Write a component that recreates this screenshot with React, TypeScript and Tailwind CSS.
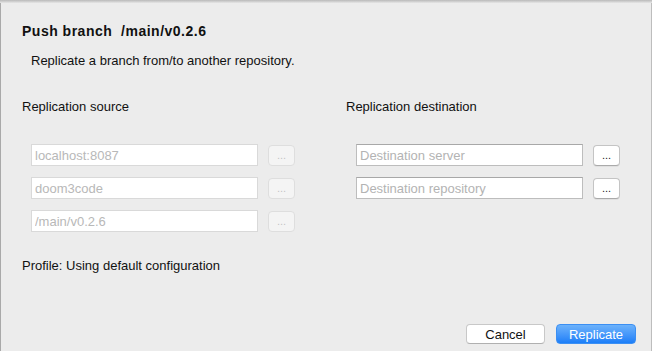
import React from "react";

const font = { fontFamily: '"Liberation Sans", Arial, sans-serif' };

function Field({
  value,
  placeholder,
  disabled,
}: {
  value?: string;
  placeholder?: string;
  disabled?: boolean;
}) {
  return (
    <div className="flex items-center gap-[10px] h-[22px]">
      <input
        readOnly
        value={value ?? ""}
        placeholder={placeholder}
        disabled={disabled}
        className={
          disabled
            ? "w-[227px] h-[22px] bg-white border border-[#d9d9d9] px-[3px] text-[13px] text-[#b8b8b8] outline-none"
            : "w-[227px] h-[22px] bg-white border border-[#bdbdbd] border-t-[#a8a8a8] px-[3px] text-[13px] text-[#222] placeholder:text-[#b3b3b3] outline-none"
        }
      />
      <button
        className={
          disabled
            ? "w-[27px] h-[21px] rounded-[4px] bg-[#f4f4f4] border border-[#dedede] text-[11px] leading-none text-[#c4c4c4] flex items-end justify-center pb-[4px]"
            : "w-[27px] h-[21px] rounded-[4px] bg-white border border-[#c4c4c4] border-b-[#aaaaaa] text-[11px] leading-none text-[#222] flex items-end justify-center pb-[4px] shadow-[0_1px_0_rgba(0,0,0,0.05)]"
        }
      >
        ...
      </button>
    </div>
  );
}

export default function App() {
  return (
    <div
      className="w-[652px] h-[351px] bg-[#ececec] relative overflow-hidden text-[#111]"
      style={font}
    >
      {/* window edges */}
      <div className="absolute top-0 left-0 right-0 h-[3px] bg-gradient-to-b from-[#b9b9b9] to-[#e6e6e6]" />
      <div className="absolute top-[3px] bottom-0 left-0 w-[1px] bg-[#a9a9a9]" />
      <div className="absolute top-[3px] bottom-0 right-0 w-[1px] bg-[#bdbdbd]" />

      <div className="flex flex-col h-full pt-[23px] pl-[22px] pr-[16px] pb-[7px]">
        <h1 className="text-[14px] font-bold tracking-[0.5px] leading-[17px]">
          Push branch &nbsp;/main/v0.2.6
        </h1>
        <p className="text-[13px] leading-[16px] mt-[13px] pl-[9px]">
          Replicate a branch from/to another repository.
        </p>

        <div className="flex mt-[30px]">
          <div className="w-[324px] flex flex-col">
            <div className="text-[13px] leading-[16px]">Replication source</div>
            <div className="flex flex-col gap-[11px] mt-[29px] pl-[9px]">
              <Field value="localhost:8087" disabled />
              <Field value="doom3code" disabled />
              <Field value="/main/v0.2.6" disabled />
            </div>
          </div>
          <div className="flex flex-col">
            <div className="text-[13px] leading-[16px]">Replication destination</div>
            <div className="flex flex-col gap-[11px] mt-[29px] pl-[10px]">
              <Field placeholder="Destination server" />
              <Field placeholder="Destination repository" />
            </div>
          </div>
        </div>

        <div className="text-[13px] leading-[16px] mt-[26px]">
          Profile: Using default configuration
        </div>

        <div className="flex-1" />

        <div className="flex justify-end gap-[11px]">
          <button className="w-[79px] h-[20px] rounded-[4px] bg-white border border-[#c8c8c8] border-b-[#b0b0b0] text-[13px] leading-none text-[#111]">
            Cancel
          </button>
          <button className="w-[80px] h-[20px] rounded-[4px] bg-gradient-to-b from-[#6cb2fb] to-[#1a7ef8] border border-[#3b8ff3] text-[13px] leading-none text-white">
            Replicate
          </button>
        </div>
      </div>
    </div>
  );
}
